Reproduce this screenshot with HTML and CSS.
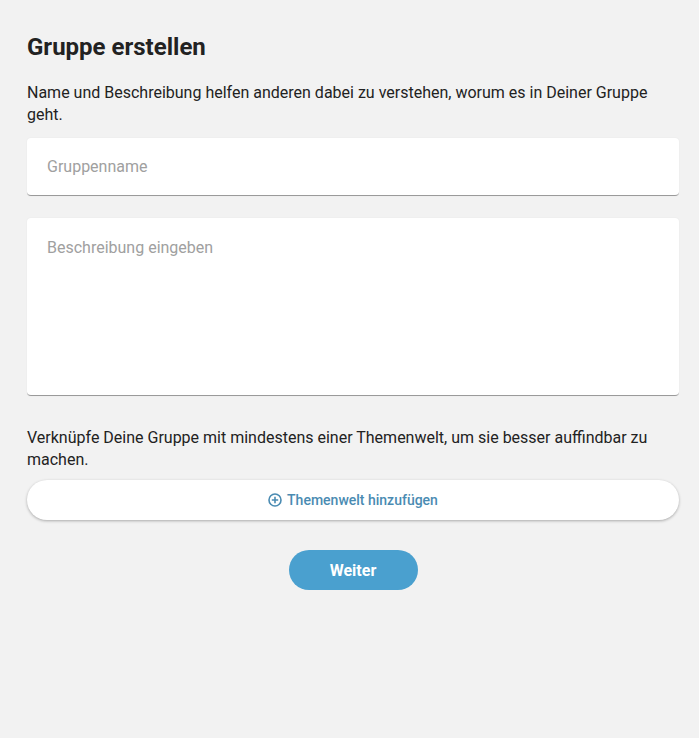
FILE: index.html
```html
<!DOCTYPE html>
<html lang="de">
<head>
    <meta charset="UTF-8">
    <meta name="viewport" content="width=device-width, initial-scale=1.0">
    <title>Gruppe erstellen</title>
    <link rel="stylesheet" href="styles.css">
</head>
<body>
    <div class="container">
        <h1>Gruppe erstellen</h1>
        <p class="hint">Name und Beschreibung helfen anderen dabei zu verstehen, worum es in Deiner Gruppe geht.</p>

        <input class="field" type="text" placeholder="Gruppenname">
        <textarea class="field field-area" placeholder="Beschreibung eingeben"></textarea>

        <p class="hint hint-topics">Verknüpfe Deine Gruppe mit mindestens einer Themenwelt, um sie besser auffindbar zu machen.</p>

        <button class="topic-btn" type="button">
            <svg class="plus-icon" width="14" height="14" viewBox="0 0 14 14">
                <circle cx="7" cy="7" r="6" fill="none" stroke="currentColor" stroke-width="1.6"/>
                <path d="M7 3.8v6.4M3.8 7h6.4" stroke="currentColor" stroke-width="1.6"/>
            </svg>
            Themenwelt hinzufügen
        </button>

        <div class="actions">
            <button class="next-btn" type="button">Weiter</button>
        </div>
    </div>
</body>
</html>
```

FILE: styles.css
```css
body {
    font-family: Roboto, "Liberation Sans", sans-serif;
    background-color: #f2f2f2;
    color: #222;
    margin: 0;
}
.container {
    padding: 32px 20px 0 27px;
}
h1 {
    font-size: 24px;
    font-weight: 700;
    margin: 0 0 20px;
    line-height: 30px;
}
.hint {
    font-size: 16px;
    line-height: 22px;
    margin: 0 0 12px;
}
.field {
    display: block;
    box-sizing: border-box;
    width: 100%;
    height: 58px;
    border: none;
    border-bottom: 1px solid #9a9a9a;
    border-radius: 4px;
    background: #fff;
    padding: 0 20px;
    font-family: inherit;
    font-size: 16px;
    color: #222;
    margin: 0 0 22px;
    box-shadow: 0 0 2px rgba(0,0,0,0.06);
    outline: none;
}
.field::placeholder {
    color: #a0a0a0;
}
.field-area {
    height: 178px;
    padding: 20px;
    resize: none;
    line-height: 20px;
    margin-bottom: 31px;
}
.hint-topics {
    margin-bottom: 9px;
}
.topic-btn {
    display: flex;
    align-items: center;
    justify-content: center;
    gap: 5px;
    width: 100%;
    height: 40px;
    border: none;
    border-radius: 20px;
    background: #fff;
    box-shadow: 0 1px 3px rgba(0,0,0,0.3);
    color: #4a8bb2;
    font-family: inherit;
    font-size: 14px;
    font-weight: 500;
    cursor: pointer;
}
.actions {
    display: flex;
    justify-content: center;
    margin-top: 30px;
}
.next-btn {
    width: 129px;
    height: 40px;
    border: none;
    border-radius: 20px;
    background: #4aa0cf;
    color: #fff;
    font-family: inherit;
    font-size: 16px;
    font-weight: 700;
    cursor: pointer;
}
```
